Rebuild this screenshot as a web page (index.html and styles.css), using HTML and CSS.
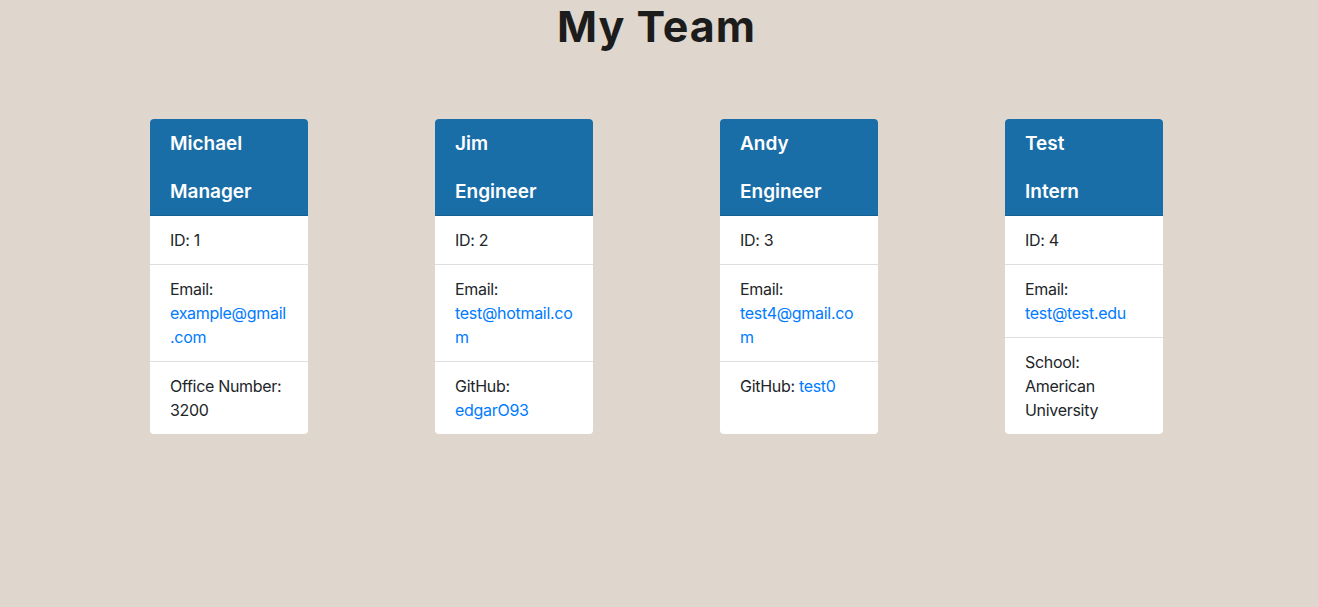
FILE: index.html
```html
<!DOCTYPE html>
<html lang="en">
<head>
<meta charset="utf-8">
<title>My Team</title>
<link rel="stylesheet" href="styles.css">
</head>
<body>
<div class="page">
  <header class="page-header">
    <h1 class="page-title">My Team</h1>
  </header>
  <main class="team">
    <div class="card">
      <div class="card-header">
        <h5 class="card-title">Michael</h5>
        <h5 class="card-title">Manager</h5>
      </div>
      <ul class="list-group">
        <li class="list-item">ID: 1</li>
        <li class="list-item">Email: <a href="#">example@gmail.com</a></li>
        <li class="list-item">Office Number: 3200</li>
      </ul>
    </div>
    <div class="card">
      <div class="card-header">
        <h5 class="card-title">Jim</h5>
        <h5 class="card-title">Engineer</h5>
      </div>
      <ul class="list-group">
        <li class="list-item">ID: 2</li>
        <li class="list-item">Email: <a href="#">test@hotmail.com</a></li>
        <li class="list-item">GitHub: <a href="#">edgarO93</a></li>
      </ul>
    </div>
    <div class="card">
      <div class="card-header">
        <h5 class="card-title">Andy</h5>
        <h5 class="card-title">Engineer</h5>
      </div>
      <ul class="list-group">
        <li class="list-item">ID: 3</li>
        <li class="list-item">Email: <a href="#">test4@gmail.com</a></li>
        <li class="list-item">GitHub: <a href="#">test0</a></li>
      </ul>
    </div>
    <div class="card">
      <div class="card-header">
        <h5 class="card-title">Test</h5>
        <h5 class="card-title">Intern</h5>
      </div>
      <ul class="list-group">
        <li class="list-item">ID: 4</li>
        <li class="list-item">Email: <a href="#">test@test.edu</a></li>
        <li class="list-item">School: American University</li>
      </ul>
    </div>
  </main>
</div>
</body>
</html>
```

FILE: styles.css
```css
* { box-sizing: border-box; }

html, body {
  margin: 0;
  padding: 0;
  height: 100%;
}

body {
  background: #dfd7ce;
  color: #212529;
  font-family: Inter, "Noto Sans", "Liberation Sans", sans-serif;
  font-size: 16px;
  line-height: 24px;
}

.page {
  padding-right: 5px;
}

.page-header {
  display: flex;
  justify-content: center;
}

.page-title {
  margin: 0;
  font-size: 43px;
  line-height: 53px;
  font-weight: 700;
  color: #1c1c1c;
  letter-spacing: 1px;
}

.team {
  display: flex;
  justify-content: center;
  align-items: stretch;
  gap: 127px;
  margin-top: 66px;
}

.card {
  width: 158px;
  display: flex;
  flex-direction: column;
  background: #fff;
  border-radius: 4px;
  overflow: hidden;
}

.card-header {
  background: #196ea7;
  color: #fff;
  padding: 13px 20px 11px;
  display: flex;
  flex-direction: column;
  gap: 24px;
  border-bottom: 1px solid rgba(0, 0, 0, 0.125);
}

.card-title {
  margin: 0;
  font-size: 19px;
  line-height: 24px;
  font-weight: 600;
}

.list-group {
  list-style: none;
  margin: 0;
  padding: 0;
}

.list-item {
  padding: 12px 20px;
  border-bottom: 1px solid rgba(0, 0, 0, 0.125);
  overflow-wrap: break-word;
  letter-spacing: -0.3px;
}

.list-item:last-child {
  border-bottom: none;
}

.list-item a {
  color: #007bff;
  text-decoration: none;
}
```
